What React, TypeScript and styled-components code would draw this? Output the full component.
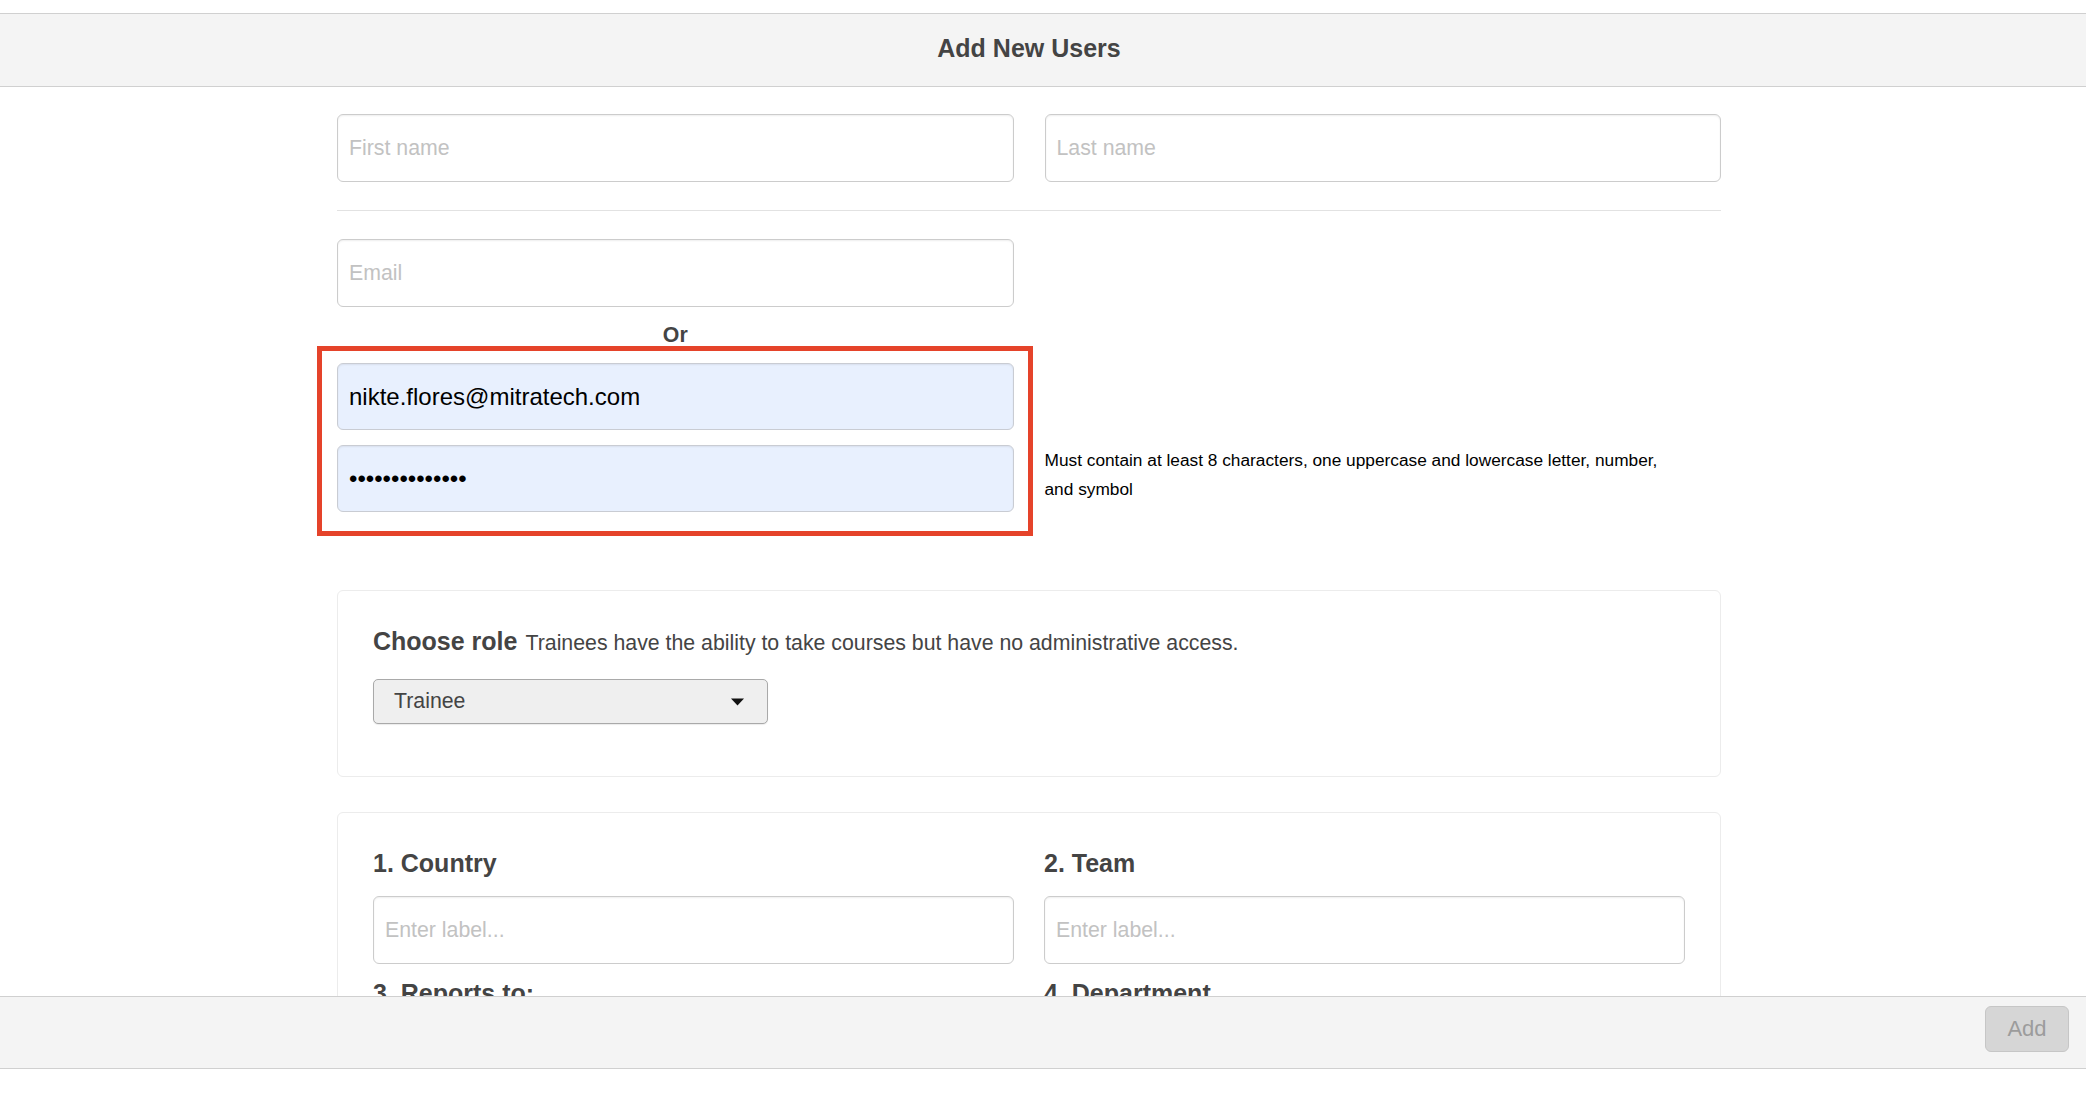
import React from 'react';
import styled, { createGlobalStyle, css } from 'styled-components';

const GlobalStyle = createGlobalStyle`
  html, body {
    margin: 0;
    padding: 0;
    background: #ffffff;
    font-family: "Liberation Sans", Arial, Helvetica, sans-serif;
  }
  * {
    box-sizing: border-box;
  }
`;

const Page = styled.div`
  height: 100vh;
  display: flex;
  flex-direction: column;
  padding: 13px 0 27px;
  overflow: hidden;
`;

const Header = styled.header`
  flex: none;
  height: 74px;
  display: flex;
  align-items: center;
  justify-content: center;
  padding: 0 28px 4px 0;
  background: #f4f4f4;
  border-top: 1px solid #d0d0d0;
  border-bottom: 1px solid #d0d0d0;
`;

const Title = styled.h1`
  margin: 0;
  font-size: 25px;
  font-weight: 700;
  color: #444444;
`;

const Body = styled.main`
  flex: 1;
  min-height: 0;
  overflow: hidden;
  padding-right: 28px;
`;

const Content = styled.div`
  width: 1384px;
  margin: 0 auto;
  padding-top: 27px;
`;

const Row = styled.div`
  display: grid;
  grid-template-columns: 1fr 1fr;
  column-gap: 31px;
`;

const TextInput = styled.input<{ $filled?: boolean }>`
  display: block;
  width: 100%;
  height: 68px;
  padding: 0 11px;
  border: 1px solid #cccccc;
  border-radius: 6px;
  background: #ffffff;
  box-shadow: inset 0 1px 2px rgba(0, 0, 0, 0.07);
  font-family: inherit;
  font-size: 21.3px;
  color: #222222;
  outline: none;

  &::placeholder {
    color: #c2c2c2;
  }

  ${({ $filled }) =>
    $filled &&
    css`
      height: 67px;
      background: #e8f0fe;
      border-color: #c9ccd3;
      font-size: 24px;
      color: #000000;
    `}
`;

const Divider = styled.hr`
  margin: 28px 0 28px;
  border: none;
  border-top: 1px solid #e2e2e2;
`;

const OrLabel = styled.div`
  margin: 17px 0;
  text-align: center;
  font-size: 21.3px;
  line-height: 22px;
  font-weight: 700;
  color: #444444;
`;

const AutofillGroup = styled.div`
  position: relative;
  display: flex;
  flex-direction: column;
  gap: 15px;

  &::after {
    content: '';
    position: absolute;
    top: -17px;
    left: -20px;
    right: -19px;
    bottom: -24px;
    border: 5px solid #e5432a;
    pointer-events: none;
  }
`;

const Hint = styled.p`
  margin: 0;
  max-width: 640px;
  padding-top: 83px;
  font-size: 17.3px;
  line-height: 29px;
  color: #000000;
`;

const Card = styled.section<{ $gap?: number }>`
  margin-top: ${({ $gap }) => $gap ?? 78}px;
  border: 1px solid #ececec;
  border-radius: 6px;
  padding: 35px 35px 52px;
`;

const RoleLine = styled.div`
  display: flex;
  align-items: baseline;
  gap: 8px;
  line-height: 30px;
  color: #444444;
`;

const RoleTitle = styled.strong`
  font-size: 25px;
  font-weight: 700;
`;

const RoleDescription = styled.span`
  font-size: 21.3px;
`;

const SelectBox = styled.div`
  margin-top: 21px;
  width: 395px;
  height: 45px;
  display: flex;
  align-items: center;
  justify-content: space-between;
  padding: 0 23px 0 20px;
  background: #efefef;
  border: 1px solid #a9a9a9;
  border-radius: 5px;
  box-shadow: 0 1px 1px rgba(0, 0, 0, 0.08);
  font-size: 21.3px;
  color: #444444;
`;

const FieldGrid = styled.div`
  display: grid;
  grid-template-columns: 1fr 1fr;
  column-gap: 30px;
  row-gap: 14px;
`;

const Field = styled.div`
  display: flex;
  flex-direction: column;
  gap: 18px;
`;

const FieldLabel = styled.h3`
  margin: 0;
  font-size: 25px;
  line-height: 30px;
  font-weight: 700;
  color: #444444;
`;

const Footer = styled.footer`
  flex: none;
  height: 73px;
  display: flex;
  align-items: flex-start;
  justify-content: flex-end;
  padding: 9px 17px 0 0;
  background: #f4f4f4;
  border-top: 1px solid #d0d0d0;
  border-bottom: 1px solid #d0d0d0;
`;

const AddButton = styled.button`
  width: 84px;
  height: 46px;
  background: #d6d6d6;
  border: 1px solid #c6c6c6;
  border-radius: 6px;
  font-family: inherit;
  font-size: 22px;
  color: #9c9c9c;
  cursor: not-allowed;
`;

const fields = ['1. Country', '2. Team', '3. Reports to:', '4. Department'];

const CaretDown = () => (
  <svg width="13" height="8" viewBox="0 0 13 8" aria-hidden="true">
    <path d="M0 0.5 L13 0.5 L6.5 7.5 Z" fill="#111111" />
  </svg>
);

const App: React.FC = () => {
  return (
    <>
      <GlobalStyle />
      <Page>
        <Header>
          <Title>Add New Users</Title>
        </Header>

        <Body>
          <Content>
            <Row>
              <TextInput placeholder="First name" />
              <TextInput placeholder="Last name" />
            </Row>

            <Divider />

            <Row>
              <div>
                <TextInput placeholder="Email" />
                <OrLabel>Or</OrLabel>
              </div>
            </Row>

            <Row>
              <AutofillGroup>
                <TextInput $filled readOnly defaultValue="nikte.flores@mitratech.com" />
                <TextInput $filled readOnly type="password" defaultValue="abcdefghijklmn" />
              </AutofillGroup>
              <Hint>
                Must contain at least 8 characters, one uppercase and lowercase letter, number,
                and symbol
              </Hint>
            </Row>

            <Card>
              <RoleLine>
                <RoleTitle>Choose role</RoleTitle>
                <RoleDescription>
                  Trainees have the ability to take courses but have no administrative access.
                </RoleDescription>
              </RoleLine>
              <SelectBox>
                <span>Trainee</span>
                <CaretDown />
              </SelectBox>
            </Card>

            <Card $gap={35}>
              <FieldGrid>
                {fields.map((label) => (
                  <Field key={label}>
                    <FieldLabel>{label}</FieldLabel>
                    <TextInput placeholder="Enter label..." />
                  </Field>
                ))}
              </FieldGrid>
            </Card>
          </Content>
        </Body>

        <Footer>
          <AddButton disabled>Add</AddButton>
        </Footer>
      </Page>
    </>
  );
};

export default App;
